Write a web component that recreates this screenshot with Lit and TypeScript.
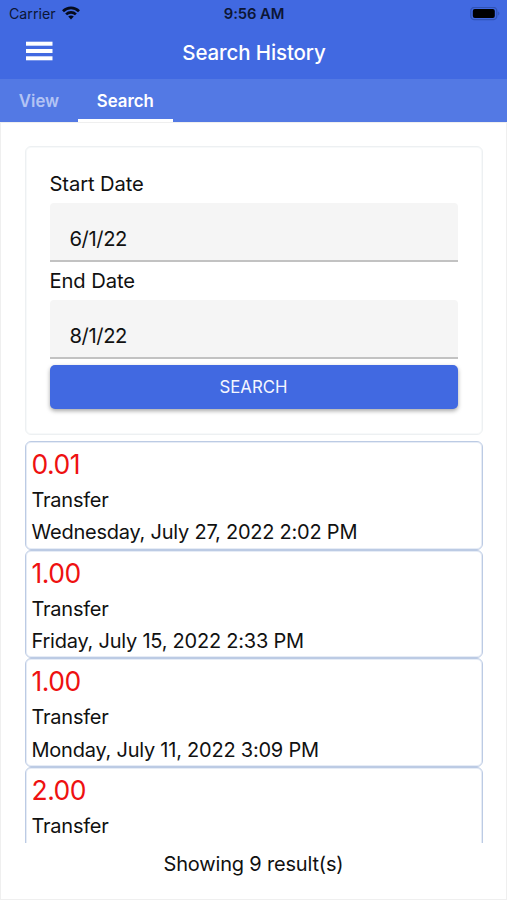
import { LitElement, html, css } from "lit";
import { customElement, property } from "lit/decorators.js";

interface Entry {
  amount: string;
  kind: string;
  date: string;
}

const entries: Entry[] = [
  { amount: "0.01", kind: "Transfer", date: "Wednesday, July 27, 2022 2:02 PM" },
  { amount: "1.00", kind: "Transfer", date: "Friday, July 15, 2022 2:33 PM" },
  { amount: "1.00", kind: "Transfer", date: "Monday, July 11, 2022 3:09 PM" },
  { amount: "2.00", kind: "Transfer", date: "" },
];

@customElement("date-field")
class DateField extends LitElement {
  @property() label = "";
  @property() value = "";
  static styles = css`
    :host { display: block; height: 97.4px; }
    .label { height: 40px; line-height: 41px; font-size: 20.2px; letter-spacing: -0.1px; }
    .box {
      box-sizing: border-box;
      height: 58.6px;
      padding: 14px 20px 0;
      line-height: 44px;
      font-size: 20.2px;
      background: #f5f5f5;
      border-bottom: 2px solid #c2c2c2;
      border-radius: 4px 4px 0 0;
      letter-spacing: -0.4px;
    }
  `;
  render() {
    return html`<div class="label">${this.label}</div><div class="box">${this.value}</div>`;
  }
}

@customElement("history-entry")
class HistoryEntry extends LitElement {
  @property({ attribute: false }) entry!: Entry;
  static styles = css`
    :host {
      display: block;
      flex: none;
      box-sizing: border-box;
      height: 108.7px;
      padding: 1px 6px 0 6px;
      border: 1px solid #bccbe4;
      border-radius: 6px;
      box-shadow: inset 0 0 0 1px #e6ecf6;
    }
    .amount { height: 41px; line-height: 42px; font-size: 26.5px; color: #ee1111; letter-spacing: -0.5px; }
    .line { height: 32.3px; line-height: 32px; white-space: nowrap; font-size: 20px; letter-spacing: -0.23px; }
  `;
  render() {
    return html`
      <div class="amount">${this.entry.amount}</div>
      <div class="line">${this.entry.kind}</div>
      <div class="line">${this.entry.date}</div>
    `;
  }
}

@customElement("app-root")
class AppRoot extends LitElement {
  static styles = css`
    :host {
      display: flex;
      flex-direction: column;
      height: 900px;
      overflow: hidden;
      background: #fff;
      color: #111;
      font: 400 20px Inter, "Liberation Sans", sans-serif;
    }
    .status {
      display: grid;
      grid-template-columns: 1fr auto 1fr;
      align-items: center;
      height: 27px;
      padding: 0 7px 0 9px;
      background: #4169e1;
      font-size: 14.2px;
      color: #0c1635;
    }
    .carrier { display: flex; align-items: center; gap: 6px; }
    .carrier svg { margin-top: -2px; }
    .time { font-weight: 600; font-size: 14.8px; letter-spacing: -0.1px; margin-left: -1px; }
    .battery { justify-self: end; display: block; }
    .bar {
      display: grid;
      grid-template-columns: 27px 1fr 27px;
      align-items: center;
      height: 52px;
      padding: 0 26px;
      background: #4169e1;
      color: #fff;
    }
    .menu { display: block; margin-top: -5px; }
    .title {
      margin-top: -2px;
      padding-left: 1px;
      text-align: center;
      font-weight: 500;
      font-size: 20.5px;
      letter-spacing: -0.12px;
      white-space: nowrap;
    }
    .tabs {
      display: flex;
      height: 43px;
      background: #5379e4;
      font-weight: 600;
      font-size: 16.8px;
      color: #b3c4f4;
    }
    .tab { box-sizing: border-box; height: 43px; line-height: 44px; text-align: center; }
    .view { width: 78px; }
    .search { width: 94.5px; color: #fff; border-bottom: 3px solid #fff; }
    .page {
      box-sizing: border-box;
      flex: 1;
      display: flex;
      flex-direction: column;
      min-height: 0;
      padding: 23px 23.5px 0;
      border: 1px solid #efefef;
    }
    .form {
      box-sizing: border-box;
      height: 288.5px;
      padding: 16px 24px 0;
      border: 1px solid #edf0f2;
      border-radius: 6px;
      box-shadow: inset 0 0 0 1px #f7f9fa;
    }
    .button {
      height: 44px;
      margin-top: 7.4px;
      border-radius: 5px;
      background: #4169e1;
      box-shadow: 0 2px 4px rgba(0, 0, 0, 0.35);
      line-height: 45px;
      text-align: center;
      font-size: 16.8px;
      color: #f4f6fe;
    }
    .list {
      display: flex;
      flex-direction: column;
      height: 402px;
      margin-top: 6.5px;
      overflow: hidden;
    }
    .total { line-height: 42px; text-align: center; letter-spacing: -0.18px; }
  `;

  render() {
    return html`
      <div class="status">
        <div class="carrier">
          <span>Carrier</span>
          <svg width="18" height="14" viewBox="0 0 18 14" fill="none" stroke="#060b1c" stroke-width="2.7">
            <path d="M1 5.2C5.6.7 12.4.7 17 5.2" />
            <path d="M4.1 8.4C6.9 5.7 11.1 5.7 13.9 8.4" />
            <path d="M9 13.5L6.2 10.6C7.8 9.2 10.2 9.2 11.8 10.6Z" fill="#060b1c" stroke="none" />
          </svg>
        </div>
        <span class="time">9:56 AM</span>
        <svg class="battery" width="30" height="14" viewBox="0 0 30 14">
          <rect x=".8" y=".3" width="26" height="12.4" rx="3.6" fill="none" stroke="#3153b5" stroke-width="1.3" />
          <rect x="2.8" y="2.1" width="22" height="8.8" rx="2" fill="#000" />
          <path d="M28.2 4.5v4c1.6-.5 1.6-3.5 0-4Z" fill="#3153b5" />
        </svg>
      </div>
      <div class="bar">
        <svg class="menu" width="27" height="20" viewBox="0 0 27 20" fill="#fff">
          <rect width="26.5" height="4" y=".7" />
          <rect width="26.5" height="4" y="8" />
          <rect width="26.5" height="4" y="15.3" />
        </svg>
        <span class="title">Search History</span>
      </div>
      <div class="tabs">
        <div class="tab view">View</div>
        <div class="tab search">Search</div>
      </div>
      <div class="page">
        <div class="form">
          <date-field label="Start Date" value="6/1/22"></date-field>
          <date-field label="End Date" value="8/1/22"></date-field>
          <div class="button">SEARCH</div>
        </div>
        <div class="list">
          ${entries.map((entry) => html`<history-entry .entry=${entry}></history-entry>`)}
        </div>
        <div class="total">Showing 9 result(s)</div>
      </div>
    `;
  }
}
